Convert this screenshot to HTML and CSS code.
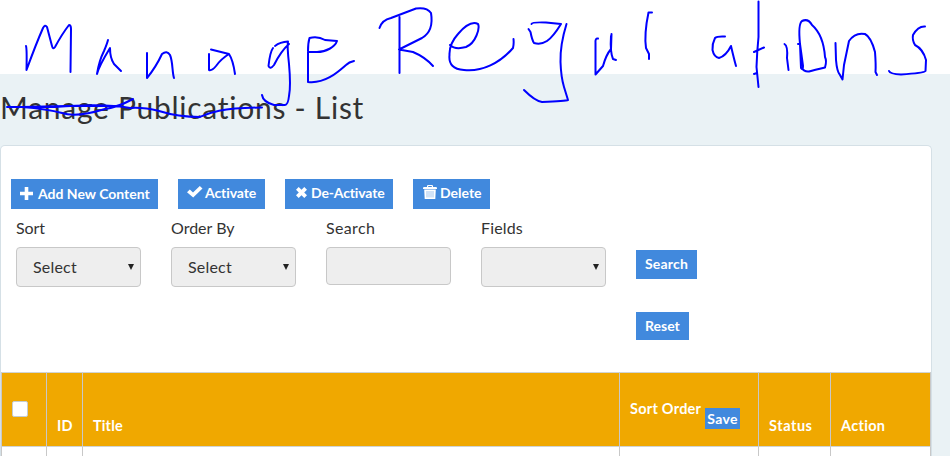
FILE: index.html
```
<!DOCTYPE html>
<html lang="en">
<head>
<meta charset="utf-8">
<title>Manage Publications - List</title>
<link rel="stylesheet" href="styles.css">
</head>
<body>
<div class="topbar"></div>
<h1 class="heading"><span>Manage Publications - List</span></h1>
<main class="panel">
  <div class="actions">
    <button class="btn add"><svg width="13" height="13" viewBox="0 0 13 13"><path d="M4.7 0h3.6v4.7H13v3.6H8.3V13H4.7V8.3H0V4.7h4.7z"/></svg><span>Add New Content</span></button>
    <button class="btn activate"><svg width="16" height="12" viewBox="0 0 16 12"><path d="M0 6.200 2.800 3.500 6 6.500 12.800 0 15.500 2.600 6.200 11.600Z"/></svg><span>Activate</span></button>
    <button class="btn deactivate"><svg width="11" height="11" viewBox="0 0 11 11"><path d="M0 2.700 2.700 0 5.500 2.700 8.300 0 11 2.700 8.200 5.500 11 8.300 8.300 11 5.500 8.200 2.700 11 0 8.300 2.800 5.500z"/></svg><span>De-Activate</span></button>
    <button class="btn delete"><svg width="14" height="14" viewBox="0 0 14 14"><path d="M4 2V.8L4.800 0h4.400l.8.800V2h3.200l.8.800V4H0V2.800L.8 2zM5.200 1.100V2h3.600v-.9zM1.200 4.600h11.600L12.300 14H1.700z"/><path class="slots" d="M4 6v6.500M6 6v6.500M8 6v6.500M10 6v6.500"/></svg><span>Delete</span></button>
  </div>
  <div class="filters">
    <div class="field"><label class="sort">Sort</label><div class="control select"><span>Select</span><i class="arrow"></i></div></div>
    <div class="field"><label class="order">Order By</label><div class="control select"><span>Select</span><i class="arrow"></i></div></div>
    <div class="field"><label class="find">Search</label><div class="control input"></div></div>
    <div class="field"><label class="fields">Fields</label><div class="control select"><span></span><i class="arrow"></i></div></div>
    <div class="submit"><button class="btn search"><span>Search</span></button><button class="btn reset"><span>Reset</span></button></div>
  </div>
  <div class="table">
    <div class="row head">
      <div class="check"><i class="box"></i></div>
      <div><span>ID</span></div>
      <div><span>Title</span></div>
      <div class="sorting"><span>Sort Order</span><button class="save"><span>Save</span></button></div>
      <div><span class="status">Status</span></div>
      <div><span class="act">Action</span></div>
    </div>
    <div class="row last"><div></div><div></div><div></div><div></div><div></div><div></div></div>
  </div>
</main>
<svg class="ink" width="950" height="140" viewBox="0 0 950 140">
  <path d="M26 46Q27 49 26.500 70Q36 44 43 28Q45 24 47 27L52 46Q53 50 55 47Q62 34 69 25Q71 25 71 29L70.500 72"/>
  <path d="M108 40Q107 44 104 51Q99 61 97 74Q99 66 110 48Q110 58 114 64L121 71"/>
  <path d="M147 53V78Q156 67 162 54Q167 50 170 55C173 62 172 72 174 78"/>
  <path d="M209 54V70Q212 71 216 66Q221 59 229 54L211 49.500M229 54Q233 60 235 74"/>
  <path d="M273 48Q270 52 268.500 66Q270 70 274 65Q281 51 289 44M275 46Q280 42 288 41.500Q287 46 289 64Q291 86 289 96Q288 105 285 105H274Q263 102 262 95"/>
  <path d="M308 51Q308 43 309.500 38Q318 36 325 40L337 41C335 47 326 52 317 52H308V82C325 84 338 72 346 65Q349 62 354 61"/>
  <path d="M379.500 28Q382 20 391 18L416 8.500Q427 7 431 13Q434 31 422 38L399 49.500L413 52Q425 57 433 66M399.500 17V73"/>
  <path d="M450 45Q455 50 466 47C476 43 480 28 478 24Q470 20 458 34Q449 44 449.500 55Q448 69 464 70C482 72 500 63 513 48Q514 44 513.500 39"/>
  <path d="M531.500 24Q532 22 546 22.500L561 24Q553 37 547 41Q541 45 534 43Q532 40 530.500 32L528.500 29M566.500 24Q560 45 560.500 62Q561 77 564 87L568 100Q566 101 542 102Q535 101 524 90"/>
  <path d="M598 38.500Q595 38 595.500 43V74.500L603 66Q606 55 611 49L611.500 34M611 36Q610 52 613 59L616 60"/>
  <path d="M652 12.500H648.500Q644 34 646 48L649 54V59"/>
  <path d="M725 36.500Q717 36 715 38Q712 44 712.500 50Q714 57 719 58Q726 56 731 46Q734 59 736 66"/>
  <path d="M758.500 1.500V37Q757 52 756.500 67L758.500 87M754 52L764 47.500M754 74L757 73"/>
  <path d="M784.500 44Q788 46 787 58L788.500 70M798 44H800L801 68Q803 71 803 66L800 44Q798 24 802 21Q808 18 812 25C820 32 824 43 825 57Q827 61 825 67.500Q814 70 809 71.500Q804 72 802 68"/>
  <path d="M835.500 43L836 60Q837 72 840 75L842.500 79.500L844 65L849 41Q855 32 865 34Q871 37 875 52Q876 65 875.500 72L877 75"/>
  <path d="M925 26.500Q918 26 913 35Q912 40 915 45Q923 49 926 60L925.500 71Q924 73 901 74.500Q890 74 889 71"/>
  <path d="M7 107L55 107Q104 103 130 108Q143 107 159 111C175 116 190 117 200 117C209 113 218 108 262 107.500M8 107H22Q47 109 62 113C74 117 92 113 105 109Q118 107 133 99M22 107L66 106L118 106"/>
</svg>
</body>
</html>
```
FILE: styles.css
```
* { box-sizing: border-box; }
body {
  margin: 0;
  width: 950px;
  height: 456px;
  overflow: hidden;
  position: relative;
  background: #eaf2f5;
  color: #333;
  font-family: Lato, "Open Sans", sans-serif;
  font-variant-ligatures: none;
}
.topbar { height: 74px; background: #fff; }
.heading {
  margin: 0;
  height: 71px;
  padding-top: 15px;
  font-size: 30px;
  line-height: 37px;
  font-weight: 400;
  letter-spacing: .73px;
  white-space: nowrap;
}
.panel {
  width: 932px;
  height: 311px;
  border: 1px solid #d5e0e6;
  border-bottom: 0;
  border-radius: 5px 5px 0 0;
  background: #fff;
}
.actions { display: flex; gap: 20px; padding: 33px 0 0 10px; }
.btn {
  display: flex;
  align-items: center;
  height: 30px;
  border: 0;
  padding: 0 9px;
  background: #4189dd;
  color: #fff;
  font: 700 14px/20px Lato, sans-serif;
  white-space: nowrap;
}
.btn svg { fill: #fff; flex: none; }
.add { width: 147px; }
.add svg { margin: -2px 5px 0 0; }
.activate { width: 87px; padding-bottom: 2px; }
.activate svg { margin: -2px 2px 0 0; }
.activate span { letter-spacing: -.1px; }
.deactivate { width: 108px; padding: 0 9px 2px 11px; }
.deactivate svg { margin: -2px 4px 0 0; }
.deactivate span { letter-spacing: -.15px; }
.delete { width: 77px; padding: 0 9px 2px 10px; }
.delete svg { margin: -3px 3px 0 0; }
.slots { stroke: #8bb6ea; stroke-width: .8; }
.filters { display: flex; gap: 30px; padding: 7px 0 0 15px; height: 163px; }
.field { width: 125px; }
label { display: block; height: 31px; font-size: 16px; line-height: 23px; }
.sort { letter-spacing: -.1px; }
.find { letter-spacing: .35px; }
.fields { letter-spacing: .15px; }
.control {
  display: flex;
  align-items: center;
  justify-content: space-between;
  height: 40px;
  padding: 0 6px 0 16px;
  border: 1px solid #c8c8c8;
  border-radius: 4px;
  background: #eee;
  font-size: 16px;
}
.control span { margin-top: -2px; letter-spacing: .2px; }
.input { height: 38px; }
.arrow { border: 3px solid transparent; border-top: 6px solid #222; border-bottom: 0; }
.submit { padding-top: 34px; }
.search { width: 61px; height: 29px; margin-bottom: 33px; padding-bottom: 1px; letter-spacing: .2px; }
.reset { width: 53px; height: 28px; }
.row {
  display: grid;
  grid-template-columns: 46px 36px 537px 139px 72px 100px;
  height: 74px;
}
.row > div { border-right: 1px solid #c8c8c8; border-top: 1px solid #d0d4d4; }
.row > :first-child { border-left: 1px solid #c8c8c8; }
.last { height: 10px; }
.head { background: #f0a800; color: #fff; font-size: 14.5px; font-weight: 700; line-height: 20px; letter-spacing: .15px; }
.head > div { display: flex; align-items: flex-end; padding: 0 0 10px 10px; }
.head > .check { align-items: center; padding: 0 0 1px 10px; }
.status { letter-spacing: .55px; }
.act { letter-spacing: .3px; }
.box { width: 16px; height: 16px; border: 1px solid #c5cdd2; border-radius: 2px; background: #fff; }
.head > .sorting { align-items: flex-start; padding-top: 26px; gap: 4px; }
.sorting > span { width: 71px; white-space: nowrap; letter-spacing: .25px; }
.save {
  width: 35px;
  height: 21px;
  margin-top: 9px;
  padding: 0 2px;
  border: 0;
  background: #4189dd;
  color: #fff;
  font: 700 14px/21px Lato, sans-serif;
  letter-spacing: .3px;
}
.ink {
  position: absolute;
  left: 0;
  top: 0;
  fill: none;
  stroke: #00f;
  stroke-width: 2;
  stroke-linecap: round;
  stroke-linejoin: round;
}
```
